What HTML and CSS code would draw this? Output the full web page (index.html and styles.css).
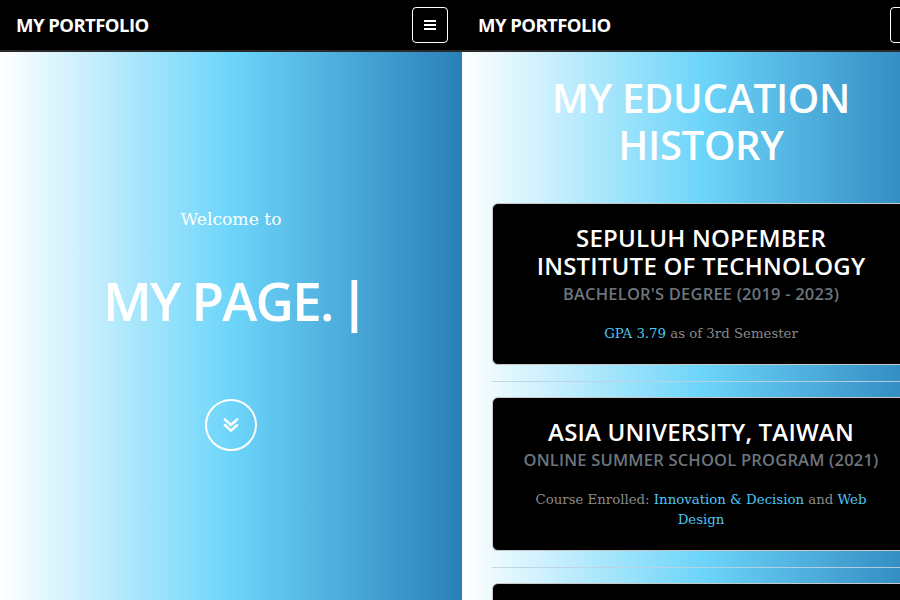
FILE: index.html
```html
<!DOCTYPE html>
<html lang="en">
<head>
<meta charset="utf-8">
<title>My Portfolio</title>
<link rel="stylesheet" href="styles.css">
</head>
<body>
<div class="screen">
  <section class="phone phone-home">
    <nav class="navbar">
      <span class="brand">MY PORTFOLIO</span>
      <button class="toggler" aria-label="Menu">
        <svg width="14" height="12" viewBox="0 0 14 12"><path d="M1 2h12M1 6h12M1 10h12" stroke="#fff" stroke-width="2" fill="none"/></svg>
      </button>
    </nav>
    <div class="hero">
      <p class="welcome">Welcome to</p>
      <h1 class="hero-title"><span class="typed">MY PAGE.</span><span class="cursor">|</span></h1>
      <a class="scroll-btn" href="#edu" aria-label="Scroll down">
        <svg width="18" height="18" viewBox="0 0 16 16"><path d="M2.5 3l5.5 5 5.5-5M2.5 8l5.5 5 5.5-5" stroke="#fff" stroke-width="2.2" fill="none" stroke-linecap="round" stroke-linejoin="round"/></svg>
      </a>
    </div>
  </section>
  <section class="phone phone-edu" id="edu">
    <nav class="navbar">
      <span class="brand">MY PORTFOLIO</span>
      <button class="toggler" aria-label="Menu">
        <svg width="14" height="12" viewBox="0 0 14 12"><path d="M1 2h12M1 6h12M1 10h12" stroke="#fff" stroke-width="2" fill="none"/></svg>
      </button>
    </nav>
    <div class="edu">
      <h2 class="edu-title">MY EDUCATION HISTORY</h2>
      <div class="card">
        <h3 class="card-title">SEPULUH NOPEMBER INSTITUTE OF TECHNOLOGY</h3>
        <p class="card-sub">BACHELOR'S DEGREE (2019 - 2023)</p>
        <p class="card-text"><span class="hl">GPA 3.79</span> as of 3rd Semester</p>
      </div>
      <hr class="sep">
      <div class="card">
        <h3 class="card-title">ASIA UNIVERSITY, TAIWAN</h3>
        <p class="card-sub">ONLINE SUMMER SCHOOL PROGRAM (2021)</p>
        <p class="card-text">Course Enrolled: <span class="hl">Innovation &amp; Decision</span> and <span class="hl">Web</span> <span class="hl">Design</span></p>
      </div>
      <hr class="sep">
      <div class="card card-last">
        <h3 class="card-title">&nbsp;</h3>
      </div>
    </div>
  </section>
</div>
</body>
</html>
```
FILE: styles.css
```css
* { box-sizing: border-box; }
html, body { margin: 0; padding: 0; overflow: hidden; }
body {
  width: 900px;
  height: 600px;
  background: #fff;
  font-family: "DejaVu Serif", "Liberation Serif", serif;
}
.screen {
  display: flex;
  width: 940px;
  height: 600px;
}
.phone {
  display: flex;
  flex-direction: column;
  height: 600px;
  overflow: hidden;
  background: linear-gradient(to right, #ffffff, #6dd5fa, #2980b9);
}
.phone-home { width: 462px; flex: none; }
.phone-edu { width: 478px; flex: none; }

.navbar {
  flex: none;
  height: 52px;
  background: #000;
  border-bottom: 2px solid #2b2b2b;
  display: flex;
  align-items: center;
  justify-content: space-between;
  padding: 0 14px 0 16px;
}
.brand {
  color: #fff;
  font-family: "Open Sans", sans-serif;
  font-weight: 700;
  font-size: 18.5px;
  letter-spacing: -0.55px;
  margin-bottom: 2px;
}
.toggler {
  width: 36px;
  height: 36px;
  border: 1px solid #fff;
  border-radius: 4px;
  background: transparent;
  display: flex;
  align-items: center;
  justify-content: center;
  padding: 0;
}

.hero {
  flex: 1;
  display: flex;
  flex-direction: column;
  align-items: center;
  padding-top: 155px;
}
.welcome {
  margin: 0;
  color: #fff;
  font-size: 17.2px;
  line-height: 24px;
}
.hero-title {
  margin: 38px 0 0;
  padding-left: 10px;
  color: #fff;
  font-family: "Open Sans", sans-serif;
  font-weight: 600;
  font-size: 53px;
  line-height: 64px;
  letter-spacing: -1.8px;
  display: flex;
  align-items: baseline;
}
.cursor { font-weight: 700; margin-left: 7px; letter-spacing: 0; }
.scroll-btn {
  margin-top: 66px;
  width: 52px;
  height: 52px;
  border: 2px solid #fff;
  border-radius: 50%;
  display: flex;
  align-items: center;
  justify-content: center;
}

.edu {
  padding: 22px 30px 0;
  display: flex;
  flex-direction: column;
}
.edu-title {
  margin: 0 0 35px;
  text-align: center;
  color: #fff;
  font-family: "Open Sans", sans-serif;
  font-weight: 600;
  font-size: 40px;
  line-height: 47px;
  letter-spacing: -0.3px;
}
.card {
  background: #000;
  border: 1px solid #c8c8c8;
  border-radius: 6px;
  padding: 20px 24px 20px;
  text-align: center;
}
.card-title {
  margin: 0;
  color: #fff;
  font-family: "Open Sans", sans-serif;
  font-weight: 600;
  font-size: 24px;
  line-height: 28px;
  letter-spacing: 0.2px;
}
.card-sub {
  margin: 3px 0 0;
  color: #6c757d;
  font-family: "Open Sans", sans-serif;
  font-weight: 600;
  font-size: 16.5px;
  line-height: 22px;
  letter-spacing: 0.2px;
}
.card-text {
  margin: 19px 0 0;
  color: #8a8a8a;
  font-size: 13.3px;
  line-height: 20px;
}
.hl { color: #4fc6f4; }
.sep {
  margin: 16px 0 15px;
  border: 0;
  border-top: 1px solid rgba(190, 210, 225, 0.9);
  height: 0;
}
.card-last { height: 40px; }
```
